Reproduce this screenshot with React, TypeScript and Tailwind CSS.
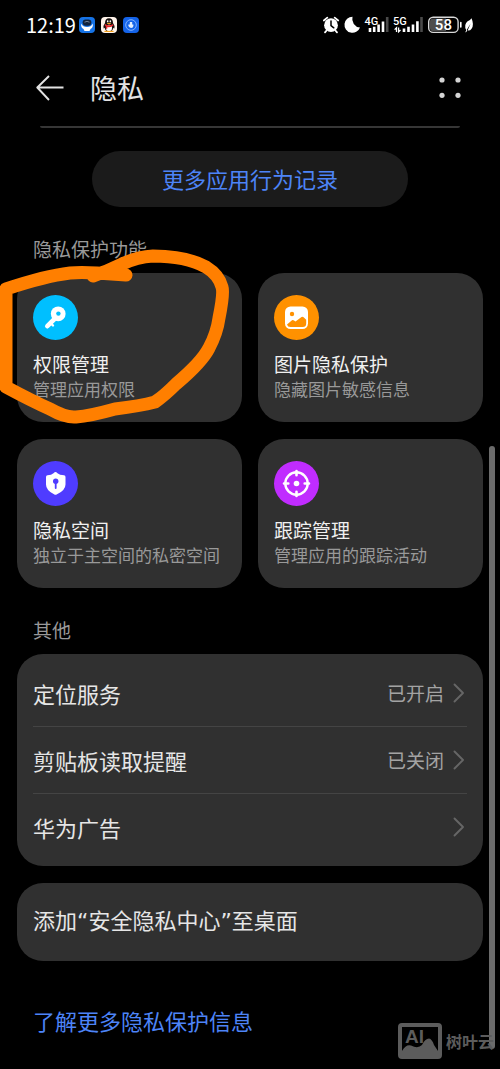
import type { ReactNode } from "react";

type Feature = {
  title: string;
  desc: string;
  color: string;
  icon: ReactNode;
};

type SettingRow = {
  label: string;
  value?: string;
};

function KeyIcon() {
  return (
    <svg viewBox="0 0 45 45" className="size-full" aria-hidden="true">
      <path d="M24 21.5 L14.3 31.2" stroke="#fff" strokeWidth="4.6" strokeLinecap="round" />
      <path d="M17.5 28 L20 30.5" stroke="#fff" strokeWidth="2.4" strokeLinecap="round" />
      <circle cx="25.2" cy="18.8" r="7.4" fill="#fff" />
      <circle cx="25.4" cy="18.6" r="2.2" fill="#00bfff" />
    </svg>
  );
}

function PictureIcon() {
  return (
    <svg viewBox="0 0 45 45" className="size-full" aria-hidden="true">
      <rect x="11" y="11.5" width="23" height="22.5" rx="5.5" fill="#fff" />
      <circle cx="18" cy="19" r="2.2" fill="#ff9100" />
      <path
        d="M13 29.5 L18 25.2 Q19 24.6 20 25.4 L21.5 26.5 L27.5 22 Q28.6 21.2 29.6 22.2 L32.2 24.8 V28.5 Q32.2 32 28.8 32 H16.5 Q13.6 32 13 29.5 Z"
        fill="#ff9100"
      />
    </svg>
  );
}

function ShieldIcon() {
  return (
    <svg viewBox="0 0 45 45" className="size-full" aria-hidden="true">
      <path
        d="M22.5 11 Q23.3 11 24.5 12.2 Q26.5 14 31 14.3 Q32.5 14.5 32.5 16 V23.5 Q32.5 29.5 23.6 33.5 Q22.5 34 21.4 33.5 Q13 29.5 13 23.5 V16 Q13 14.5 14.5 14.3 Q18.5 14 20.5 12.2 Q21.7 11 22.5 11 Z"
        fill="#fff"
      />
      <circle cx="22.7" cy="20.2" r="2.7" fill="#4f3cff" />
      <path d="M22.7 21 V27" stroke="#4f3cff" strokeWidth="1.8" strokeLinecap="round" />
    </svg>
  );
}

function TargetIcon() {
  return (
    <svg viewBox="0 0 45 45" className="size-full" fill="none" stroke="#fff" aria-hidden="true">
      <circle cx="22.5" cy="22.5" r="11.2" strokeWidth="2.4" />
      <path
        d="M22.5 10 V14.3 M22.5 30.7 V35 M10 22.5 H14.3 M30.7 22.5 H35"
        strokeWidth="2.6"
        strokeLinecap="round"
      />
      <circle cx="22.5" cy="22.5" r="2.8" fill="#fff" stroke="none" />
    </svg>
  );
}

const FEATURES: Feature[] = [
  { title: "权限管理", desc: "管理应用权限", color: "bg-[#00bfff]", icon: <KeyIcon /> },
  { title: "图片隐私保护", desc: "隐藏图片敏感信息", color: "bg-[#ff9100]", icon: <PictureIcon /> },
  { title: "隐私空间", desc: "独立于主空间的私密空间", color: "bg-[#4f3cff]", icon: <ShieldIcon /> },
  { title: "跟踪管理", desc: "管理应用的跟踪活动", color: "bg-[#c02cff]", icon: <TargetIcon /> },
];

const ROWS: SettingRow[] = [
  { label: "定位服务", value: "已开启" },
  { label: "剪贴板读取提醒", value: "已关闭" },
  { label: "华为广告" },
];

function AppBadges() {
  return (
    <div className="flex items-center gap-[6px]">
      <svg width="16" height="16" viewBox="0 0 16 16" aria-hidden="true">
        <rect width="16" height="16" rx="4" fill="#1673e6" />
        <path d="M2 6.500 Q4 10 8 10 Q12 10 14 6.5 Q14 11 11.5 12 L10.5 14 H5.5 L4.5 12 Q2 11 2 6.5 Z" fill="#fff" />
        <rect x="3.6" y="2.5" width="8.8" height="6.2" rx="3.1" fill="#10223c" />
        <path d="M5.5 5.2 Q8 3.6 10.5 5.2" stroke="#8a9aad" strokeWidth="0.8" fill="none" />
      </svg>
      <svg width="16" height="16" viewBox="0 0 16 16" aria-hidden="true">
        <rect width="16" height="16" rx="4" fill="#fff3ea" />
        <path d="M8 1.2 Q12 1.2 12 6 Q14.3 9 13.4 11.5 Q12.6 11.5 12.2 10.8 Q12 13 10.5 14 H5.5 Q4 13 3.8 10.8 Q3.4 11.5 2.6 11.5 Q1.7 9 4 6 Q4 1.2 8 1.2 Z" fill="#16110f" />
        <ellipse cx="8" cy="11" rx="3" ry="3.3" fill="#fff" />
        <path d="M4 7 Q8 9.6 12 7 L12.3 8.8 Q8 11 6.4 10 L6.2 12 L4.8 11.6 V9.2 L3.7 8.6 Z" fill="#e3262b" />
        <ellipse cx="6.7" cy="4.3" rx="0.8" ry="1.1" fill="#fff" />
        <ellipse cx="9.3" cy="4.3" rx="0.8" ry="1.1" fill="#fff" />
        <ellipse cx="8" cy="6.5" rx="2" ry="0.8" fill="#f3a01c" />
        <path d="M4 14.4 H7.4 M8.6 14.4 H12" stroke="#f3a01c" strokeWidth="1.3" strokeLinecap="round" />
      </svg>
      <svg width="16" height="16" viewBox="0 0 16 16" fill="none" aria-hidden="true">
        <rect width="16" height="16" rx="4" fill="#1463e8" />
        <circle cx="8" cy="8" r="5.3" stroke="#8fbcff" strokeWidth="0.9" />
        <path d="M5.4 7.4 H10.4 V9 Q10.2 11 8.2 11 Q6.6 11 5.4 9 Z M6.8 5 H9.2 V7.6 H6.8 Z" fill="#e4f0ff" />
      </svg>
    </div>
  );
}

function StatusIcons() {
  return (
    <svg width="152" height="22" viewBox="323 14 152 22" fill="none" aria-hidden="true">
      {/* alarm */}
      <circle cx="331" cy="25.2" r="6.9" fill="#fff" />
      <path d="M323.8 20.5 L327.3 17.6 M338.2 20.5 L334.7 17.6" stroke="#fff" strokeWidth="1.7" strokeLinecap="round" />
      <path d="M326.6 30.5 L325 32.4 M335.4 30.5 L337 32.4" stroke="#fff" strokeWidth="1.8" strokeLinecap="round" />
      <path d="M331 21 V25.6 L333.8 27.8" stroke="#000" strokeWidth="1.5" strokeLinecap="round" />
      {/* do not disturb */}
      <path d="M352.5 16.8 A8 8 0 1 0 360 27.5 A8.6 8.6 0 0 1 352.5 16.8 Z" fill="#fff" />
      {/* sim 1 */}
      <text x="364.5" y="25" fontSize="11" fontWeight="500" fill="#fff" fontFamily="Roboto, sans-serif">4G</text>
      <path d="M370 28 V32 M374.2 26.7 V32 M378.6 24.5 V32 M383 21.5 V32" stroke="#fff" strokeWidth="2.6" />
      <path d="M387.2 17 V32" stroke="#4a4a4a" strokeWidth="2.6" />
      {/* sim 2 */}
      <text x="393" y="25" fontSize="11" fontWeight="500" fill="#fff" fontFamily="Roboto, sans-serif">5G</text>
      <path d="M396.5 32 V27.8 L394.6 29.6 M398.6 27.6 V31.8 L400.5 30" stroke="#fff" strokeWidth="1.3" />
      <path d="M404 28.5 V32 M408.5 26.7 V32 M413 24.5 V32 M417.4 21.2 V32" stroke="#fff" strokeWidth="2.6" />
      <path d="M421.5 17 V32" stroke="#4a4a4a" strokeWidth="2.6" />
      {/* battery */}
      <rect x="428.7" y="17.2" width="29.4" height="15.2" rx="4.5" fill="#000" stroke="#d8d8d8" strokeWidth="1.4" />
      <path d="M433 18.5 H446 V31.1 H433 Q430 31.1 430 28 V21.5 Q430 18.5 433 18.5 Z" fill="#4d4d4d" />
      <text x="443.4" y="30" fontSize="15" fontWeight="500" textAnchor="middle" fill="#fff" fontFamily="Roboto, sans-serif">58</text>
      <path d="M460.8 22.6 V27" stroke="#fff" strokeWidth="1.6" strokeLinecap="round" />
      {/* power saving leaf */}
      <path d="M471.5 18.2 Q474.5 25 471.4 29 Q469.8 31 467.6 30.4 L470.6 23.4 L466.4 30.4 Q463.2 25 467.6 21.2 Q470.4 20 471.5 18.2 Z" fill="#fff" />
      <path d="M466.8 30 L465.8 32.2" stroke="#fff" strokeWidth="1" />
    </svg>
  );
}

function StatusBar() {
  return (
    <div className="flex h-[50px] items-center justify-between pr-[25px] pl-[26px]">
      <div className="flex items-center gap-[3px]">
        <span className="text-[20px] leading-7 text-white">12:19</span>
        <AppBadges />
      </div>
      <StatusIcons />
    </div>
  );
}

function Header() {
  return (
    <header className="flex h-[76px] items-center pr-[38px] pl-9">
      <button type="button" aria-label="返回" className="mr-[26px]">
        <svg width="28" height="26" viewBox="0 0 28 26" fill="none" stroke="#e3e3e3" strokeWidth="1.9" aria-hidden="true">
          <path d="M13 1 L1.3 12.5 L13 25 M1.3 12.5 H27.5" strokeLinejoin="round" />
        </svg>
      </button>
      <h1 className="text-[27px] leading-9 text-[#e3e3e3]">隐私</h1>
      <button type="button" aria-label="更多" className="ml-auto">
        <svg width="24" height="24" viewBox="0 0 24 24" fill="#d4d4d4" aria-hidden="true">
          <circle cx="4" cy="4" r="2.6" />
          <circle cx="20" cy="4" r="2.6" />
          <circle cx="4" cy="19.3" r="2.6" />
          <circle cx="20" cy="19.3" r="2.6" />
        </svg>
      </button>
    </header>
  );
}

function FeatureCard({ title, desc, color, icon }: Feature) {
  return (
    <button type="button" className="flex flex-col items-start rounded-[26px] bg-[#303030] px-4 py-[22px] text-left">
      <span className={`mb-[10px] block size-[45px] rounded-full ${color}`}>{icon}</span>
      <span className="text-[19px] leading-7 text-[#f0f0f0]">{title}</span>
      <span className="text-[17px] leading-[22px] whitespace-nowrap text-[#999999]">{desc}</span>
    </button>
  );
}

function SectionTitle({ children }: { children: ReactNode }) {
  return <h2 className="mt-7 mb-[10px] px-4 text-[19px] leading-7 text-[#999999]">{children}</h2>;
}

function Chevron() {
  return (
    <svg width="12" height="20" viewBox="0 0 12 20" fill="none" stroke="#666" strokeWidth="1.9" aria-hidden="true">
      <path d="M1.5 1.5 L10 10 L1.5 18.5" strokeLinecap="round" strokeLinejoin="round" />
    </svg>
  );
}

function Scribble() {
  return (
    <svg
      width="240"
      height="430"
      viewBox="0 0 240 430"
      fill="none"
      className="pointer-events-none absolute top-0 left-0"
      aria-hidden="true"
    >
      <path
        d="M126 275 L97 273 Q80 272 70 273 Q45 276 6 289 L6 387 Q32 401 50 409 Q66 418 76 417 Q90 416 115 409 Q140 406 155 402 Q164 396 176 384 Q202 362 209 348 Q217 333 219 318 Q224 293 222 287 Q219 275 206 267 Q186 256 153 256 Q137 257 122 264 Q108 271 93 276"
        stroke="#ff7f00"
        strokeWidth="13"
        strokeLinecap="round"
        strokeLinejoin="round"
      />
    </svg>
  );
}

function Watermark() {
  return (
    <div className="pointer-events-none absolute right-[6px] bottom-[10px] flex items-center gap-1 text-[#5c5c5c]">
      <svg width="44" height="36" viewBox="0 0 44 36" aria-hidden="true">
        <rect x="2" y="2" width="40" height="32" rx="2" fill="#000" stroke="currentColor" strokeWidth="4" />
        <text x="7" y="20" fontSize="19" fontWeight="700" fill="currentColor" fontFamily="Liberation Sans, sans-serif">AI</text>
        <path d="M4 28 Q8 21 13 22.5 Q20 26 24 22 Q27 15.5 31 15.5 Q34 16 36 22 L40 28 V34 H4 Z" fill="currentColor" />
      </svg>
      <span className="text-[16px] leading-6 font-bold">树叶云</span>
    </div>
  );
}

export default function App() {
  return (
    <div
      lang="zh-CN"
      className="relative min-h-screen overflow-hidden bg-black font-['Noto_Sans_CJK_SC',sans-serif]"
    >
      <StatusBar />
      <Header />

      <main className="px-[17px] pb-[33px]">
        <div className="mx-[23px] h-[2px] rounded-b-full bg-[#363636]" />
        <button
          type="button"
          className="mx-auto mt-[23px] block h-14 w-[68%] rounded-full bg-[#1b1b1b] pb-[3px] text-[22px] leading-8 text-[#4d84f7]"
        >
          更多应用行为记录
        </button>

        <SectionTitle>隐私保护功能</SectionTitle>
        <div className="grid grid-cols-2 gap-x-4 gap-y-[17px]">
          {FEATURES.map((f) => (
            <FeatureCard key={f.title} {...f} />
          ))}
        </div>

        <SectionTitle>其他</SectionTitle>
        <ul className="rounded-[26px] bg-[#303030] px-4 py-[6px]">
          {ROWS.map((row) => (
            <li key={row.label} className="border-b border-[#444444] last:border-b-0">
              <button type="button" className="flex h-[66px] w-full items-center pr-[2px] text-left">
                <span className="text-[22px] leading-8 text-[#e6e6e6]">{row.label}</span>
                <span className="mr-[9px] ml-auto text-[19px] leading-7 text-[#a3a3a3]">{row.value}</span>
                <Chevron />
              </button>
            </li>
          ))}
        </ul>

        <button
          type="button"
          className="mt-[17px] block h-[78px] w-full rounded-[26px] bg-[#303030] px-4 text-left font-['DejaVu_Sans','Noto_Sans_CJK_SC',sans-serif] text-[22px] leading-8 text-[#e6e6e6]"
        >
          添加“安全隐私中心”至桌面
        </button>

        <a href="#more" className="mt-[43px] ml-4 inline-block text-[22px] leading-8 text-[#4d84f7]">
          了解更多隐私保护信息
        </a>
      </main>

      <Scribble />
      <div className="absolute top-[446px] right-[5px] bottom-5 w-[6px] rounded-full bg-[#6b6b6b]" />
      <Watermark />
    </div>
  );
}
